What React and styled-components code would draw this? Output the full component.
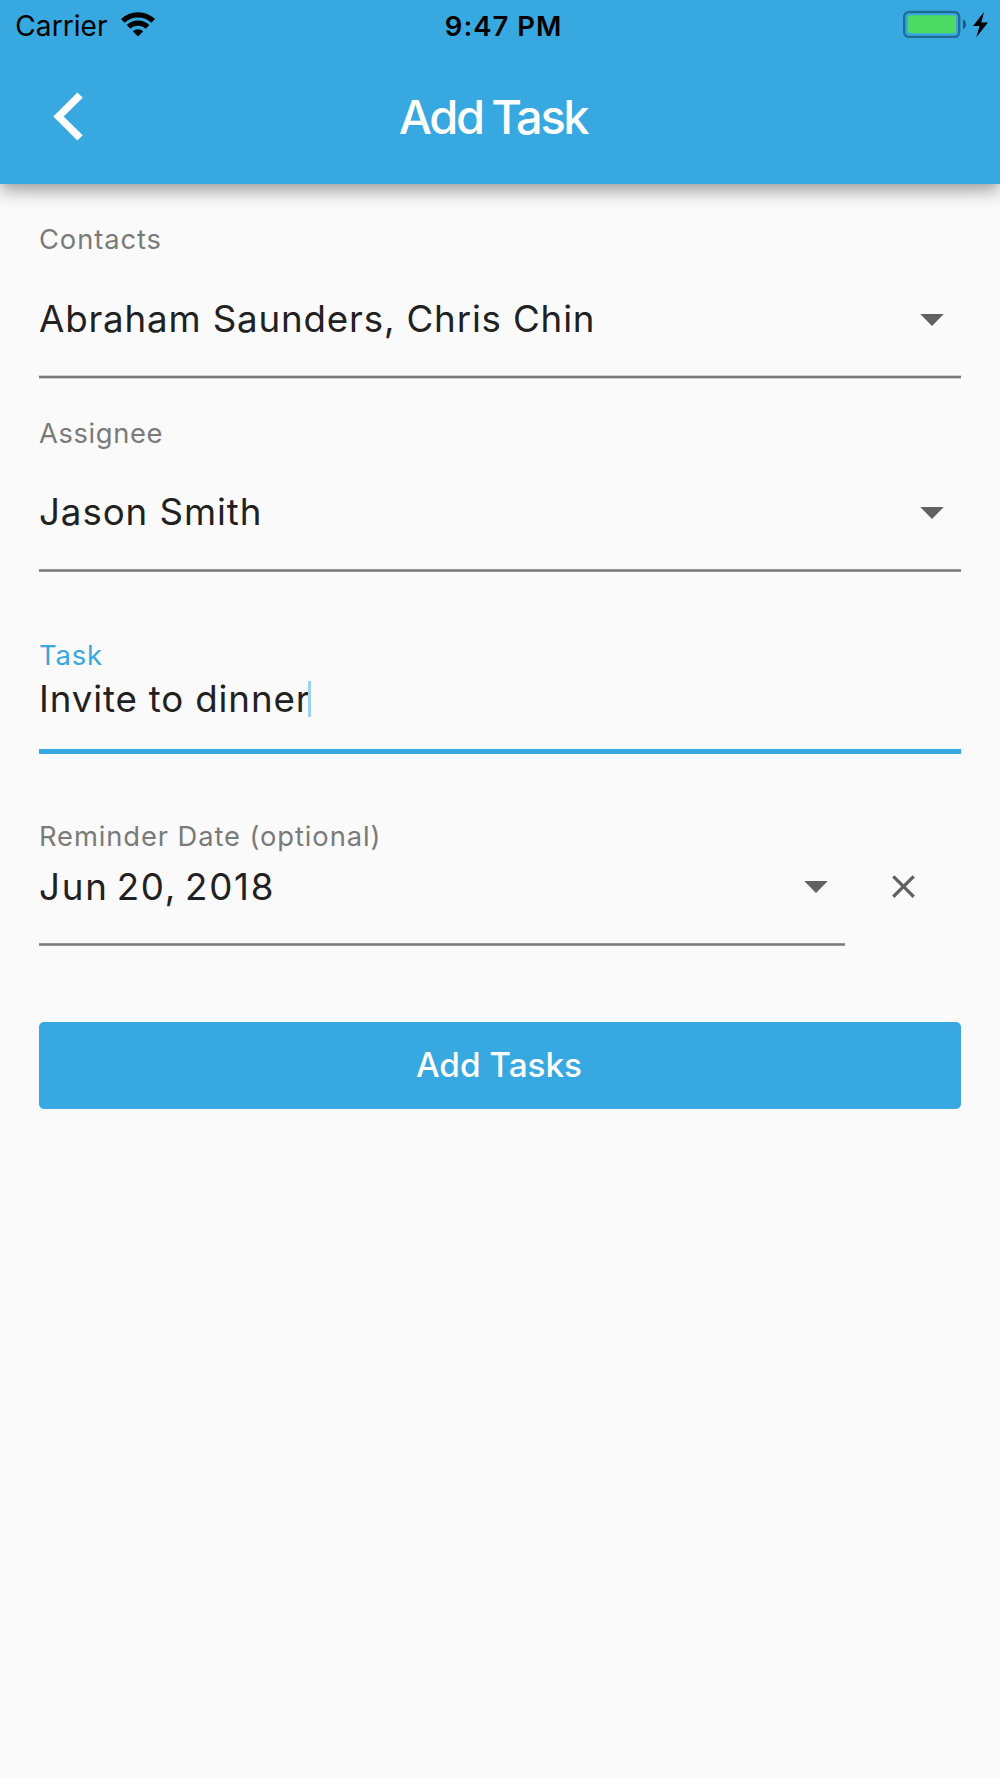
import React, { Component } from 'react'
import styled, { createGlobalStyle } from 'styled-components'
import { MdClose } from 'react-icons/md'

const blue = '#37a8e0'
const ink = '#212121'
const grey = '#7a7a7a'
const iconGrey = '#616161'

const GlobalStyle = createGlobalStyle`
	* {
		box-sizing: border-box;
	}
	body {
		margin: 0;
		background: #fafafa;
		font-family: Inter, "Liberation Sans", sans-serif;
	}
`

const Screen = styled.div`
	display: flex;
	flex-direction: column;
	width: 1000px;
	height: 1778px;
	background: #fafafa;
	overflow: hidden;
`

const Header = styled.header`
	height: 184px;
	flex: none;
	background: ${blue};
	box-shadow:
		0 5px 11px -3px rgba(0, 0, 0, 0.2),
		0 11px 13px 0 rgba(0, 0, 0, 0.14),
		0 3px 27px 0 rgba(0, 0, 0, 0.12);
`

const StatusBar = styled.div`
	display: grid;
	grid-template-columns: 1fr auto 1fr;
	height: 54px;
	padding: 9px 12px 0 15.3px;
	line-height: 34px;
	color: #000;
`

const Carrier = styled.div`
	display: flex;
	font-size: 28px;
	letter-spacing: 0.08px;

	svg {
		margin: 3px 0 0 13.5px;
	}
`

const Clock = styled.div`
	padding-left: 4px;
	font-size: 27.5px;
	font-weight: 600;
	letter-spacing: 1.02px;
`

const Power = styled.div`
	display: flex;
	justify-content: flex-end;
	padding-top: 1px;
`

const NavBar = styled.div`
	display: grid;
	grid-template-columns: 1fr auto 1fr;
	align-items: center;
	height: 130px;
	padding: 0 14px 6px 0;
`

const BackButton = styled.button`
	display: flex;
	justify-self: start;
	margin-left: 53px;
	padding: 0;
	border: 0;
	background: none;
`

const Title = styled.h1`
	margin: 0;
	color: #fff;
	font-size: 47px;
	font-weight: 500;
	line-height: 57px;
	letter-spacing: -2.4px;
	word-spacing: -1.5px;
`

const Form = styled.form`
	display: flex;
	flex-direction: column;
	padding: 0 39px;
`

const Field = styled.div`
	display: flex;
	flex-direction: column;
	padding-top: ${props => props.$top}px;
`

const Label = styled.label`
	color: ${props => props.$focused ? blue : grey};
	font-size: 27.3px;
	line-height: 33px;
	letter-spacing: ${props => props.$spacing || 0.92}px;
`

const ValueRow = styled.div`
	display: flex;
	justify-content: space-between;
	padding: ${props => props.$above}px 17px ${props => props.$below}px 0;
`

const Value = styled.div`
	display: flex;
	color: ${ink};
	font-size: 36.7px;
	line-height: 45px;
	letter-spacing: ${props => props.$spacing || 0.9}px;
	word-spacing: ${props => props.$wordSpacing || 0}px;
	white-space: nowrap;
`

const Caret = styled.span`
	width: 3px;
	height: 36px;
	margin: 5px 0 0 -2.5px;
	background: #9bd4f0;
`

const Arrow = styled.svg`
	width: 24px;
	height: 12px;
	margin-top: ${props => props.$top || 18}px;
	fill: ${iconGrey};
`

const Rule = styled.div`
	height: 3px;
	background: linear-gradient(#969696 1px, ${grey} 1px, ${grey} 2px, #969696 2px);
`

const WideRule = styled.div`
	height: 4px;
	background: linear-gradient(#d0d0d0 1px, ${grey} 1px, ${grey} 3px, #d0d0d0 3px);
`

const FocusRule = styled.div`
	height: 5px;
	background: ${blue};
`

const DateRow = styled.div`
	display: flex;
	align-items: flex-end;
`

const DateField = styled(Field)`
	width: 806px;
`

const ClearButton = styled.button`
	display: flex;
	margin: 0 0 40px 38.5px;
	padding: 0;
	border: 0;
	background: none;
	color: ${iconGrey};
	font-size: 39px;
`

const SubmitButton = styled.button`
	height: 87px;
	margin-top: 76px;
	padding: 0 2px 1px 0;
	border: 0;
	border-radius: 5px;
	background: ${blue};
	color: #fff;
	font-family: inherit;
	font-size: 33.3px;
	font-weight: 500;
`

const WifiIcon = () => (
	<svg width="34" height="25" viewBox="0 0 34 25">
		<g fill="none" stroke="#000" strokeWidth="5.2">
			<path d="M1.8 8.9A22 22 0 0 1 32.2 8.9" />
			<path d="M7.5 14.9A13.6 13.6 0 0 1 26.5 14.9" />
		</g>
		<path d="M17 24.5L11.8 19.3A7.4 7.4 0 0 1 22.2 19.3Z" />
	</svg>
)

const BatteryIcon = () => (
	<svg width="85" height="28" viewBox="903 10 85 28">
		<rect x="904.2" y="12" width="55" height="25" rx="5" fill="none" stroke="#206c94" strokeWidth="2.4" />
		<rect x="908" y="15.3" width="48" height="18" rx="2.5" fill="#4cd964" />
		<path d="M963 19.3Q966 21 966 24.3T963 29.3Z" fill="#1b587a" />
		<path d="M984 12L973 26H979.6L976.3 37.3L988 22.6H981.3Z" />
	</svg>
)

const DropArrow = ({ top }) => (
	<Arrow viewBox="0 0 24 12" $top={top}>
		<path d="M0.2 0H23.8L12 12Z" />
	</Arrow>
)

class App extends Component {
	render() {
		return (
			<Screen>
				<GlobalStyle />
				<Header>
					<StatusBar>
						<Carrier>Carrier<WifiIcon /></Carrier>
						<Clock>9:47 PM</Clock>
						<Power><BatteryIcon /></Power>
					</StatusBar>
					<NavBar>
						<BackButton type="button" aria-label="Back">
							<svg width="30" height="49" viewBox="0 0 30 49">
								<path d="M24.4 0.5L29.8 5.7L10.6 24.5L29.8 43.3L24.4 48.5L0.3 24.5Z" fill="#fff" />
							</svg>
						</BackButton>
						<Title>Add Task</Title>
					</NavBar>
				</Header>

				<Form>
					<Field $top={39}>
						<Label>Contacts</Label>
						<ValueRow $above={40} $below={34}>
							<Value $spacing={0.84}>Abraham Saunders, Chris Chin</Value>
							<DropArrow />
						</ValueRow>
						<WideRule />
					</Field>

					<Field $top={38}>
						<Label $spacing={0.63}>Assignee</Label>
						<ValueRow $above={39} $below={35}>
							<Value $spacing={0.92}>Jason Smith</Value>
							<DropArrow />
						</ValueRow>
						<Rule />
					</Field>

					<Field $top={67}>
						<Label $focused>Task</Label>
						<ValueRow $above={4} $below={28}>
							<Value $spacing={0.85}>Invite to dinner<Caret /></Value>
						</ValueRow>
						<FocusRule />
					</Field>

					<DateRow>
						<DateField $top={66}>
							<Label>Reminder Date (optional)</Label>
							<ValueRow $above={11} $below={34}>
								<Value $spacing={1.75} $wordSpacing={-4}>Jun 20, 2018</Value>
								<DropArrow top={17} />
							</ValueRow>
							<Rule />
						</DateField>
						<ClearButton type="button" aria-label="Clear date"><MdClose /></ClearButton>
					</DateRow>

					<SubmitButton type="button">Add Tasks</SubmitButton>
				</Form>
			</Screen>
		)
	}
}

export default App
